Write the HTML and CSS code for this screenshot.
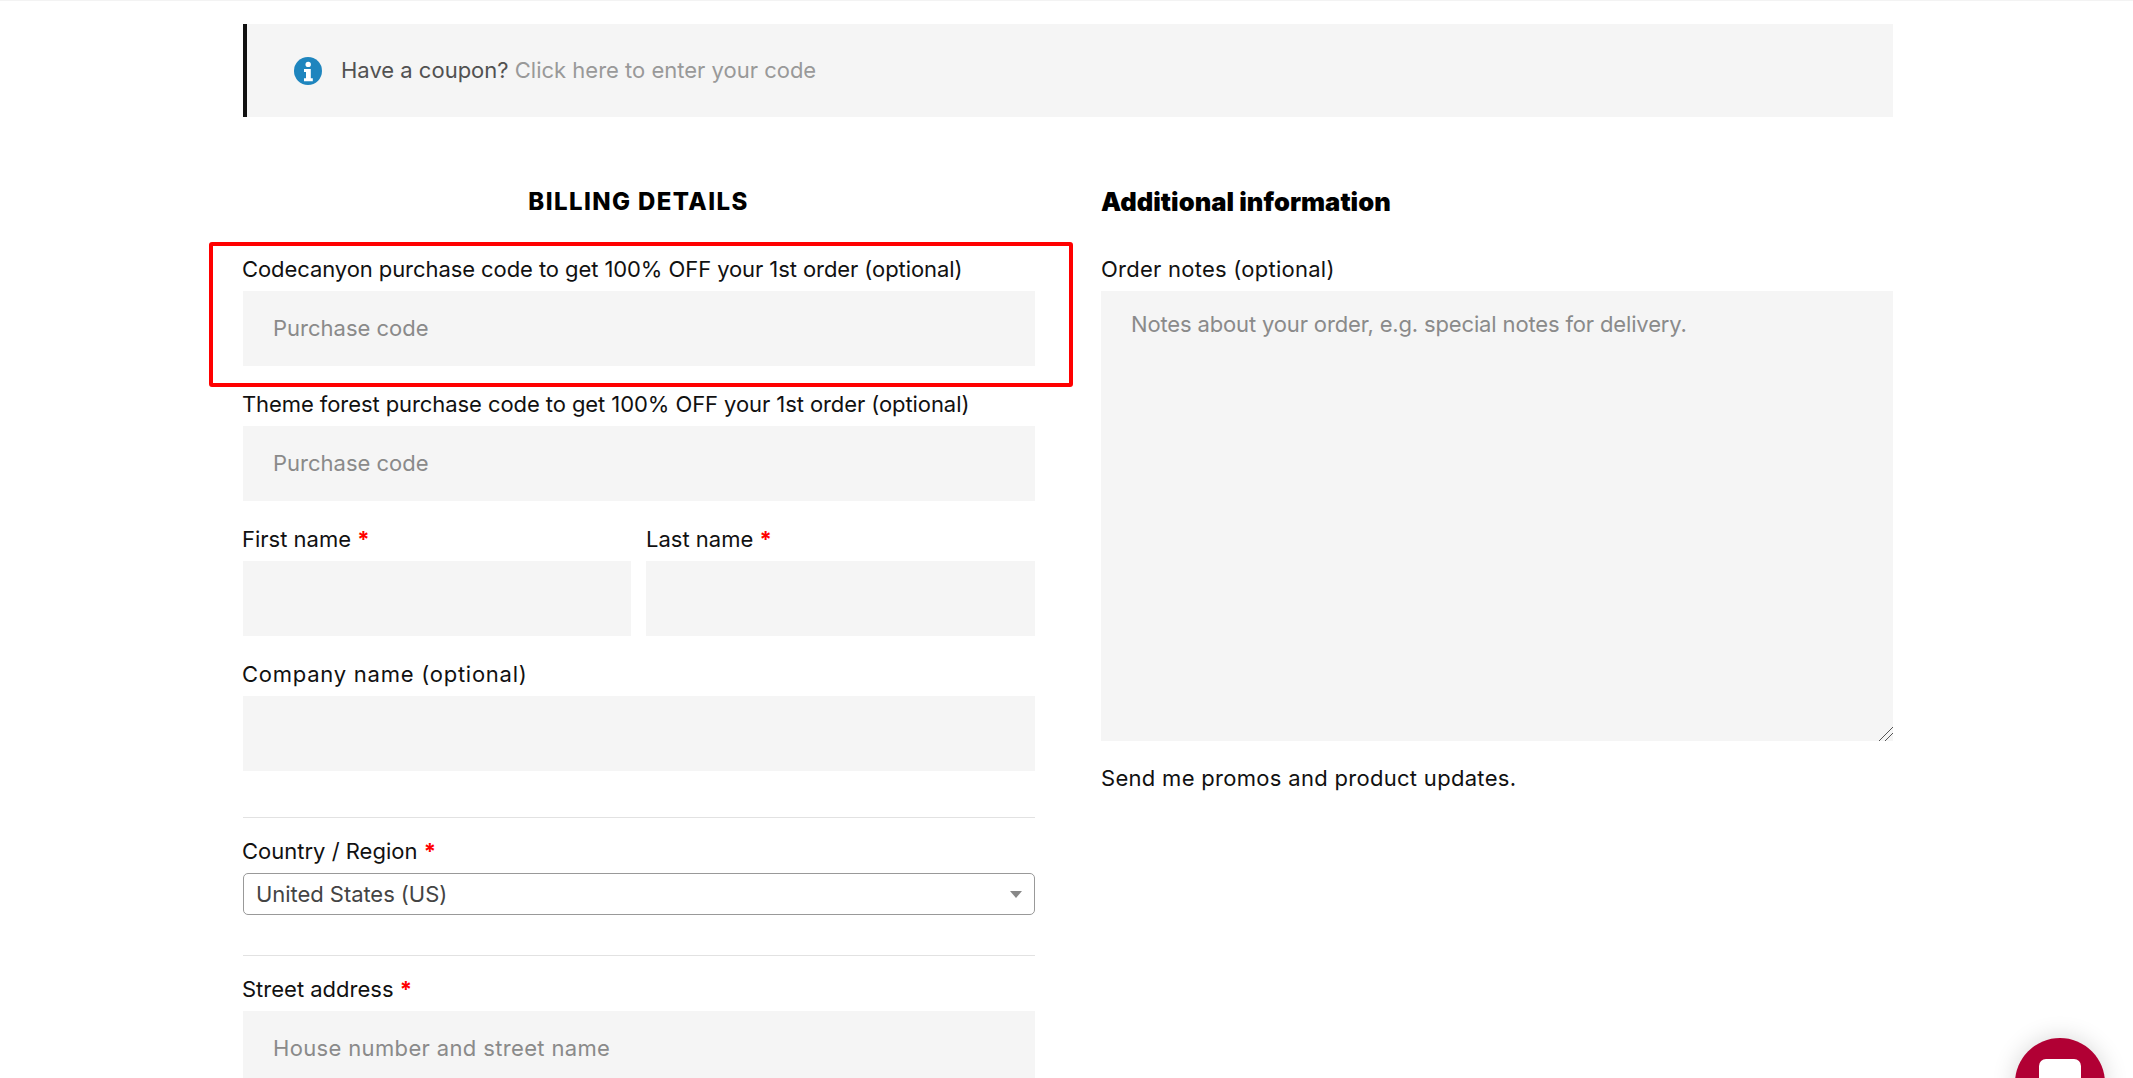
FILE: index.html
```html
<!DOCTYPE html>
<html lang="en">
<head>
<meta charset="utf-8">
<title>Checkout</title>
<link rel="stylesheet" href="styles.css">
</head>
<body>
<main class="page">
  <div class="coupon">
    <svg class="coupon-icon" viewBox="0 0 28 28" aria-hidden="true">
      <circle cx="14" cy="14" r="14" fill="#1e85be"/>
      <circle cx="14.2" cy="7.4" r="2.7" fill="#fff"/>
      <path d="M10 12h6.8v9.2h2v3H10v-3h2v-6.2h-2z" fill="#fff"/>
    </svg>
    <p class="coupon-text">Have a coupon? <a class="coupon-link" href="#">Click here to enter your code</a></p>
  </div>
  <div class="columns">
    <section>
      <h2 class="title title-center">BILLING DETAILS</h2>
      <div class="field">
        <label class="label label-long">Codecanyon purchase code to get 100% OFF your 1st order (optional)</label>
        <input class="input" placeholder="Purchase code">
      </div>
      <div class="field">
        <label class="label label-long">Theme forest purchase code to get 100% OFF your 1st order (optional)</label>
        <input class="input" placeholder="Purchase code">
      </div>
      <div class="name-row">
        <div class="field">
          <label class="label">First name <span class="req">*</span></label>
          <input class="input">
        </div>
        <div class="field">
          <label class="label label-flush">Last name <span class="req">*</span></label>
          <input class="input">
        </div>
      </div>
      <div class="field">
        <label class="label label-wide">Company name (optional)</label>
        <input class="input">
      </div>
      <hr class="divider">
      <div class="field field-select">
        <label class="label">Country / Region <span class="req">*</span></label>
        <div class="select-box">
          <span class="select-value">United States (US)</span>
          <span class="select-arrow"></span>
        </div>
      </div>
      <hr class="divider divider-tight">
      <div class="field">
        <label class="label">Street address <span class="req">*</span></label>
        <input class="input input-wide" placeholder="House number and street name">
      </div>
    </section>
    <section>
      <h2 class="title title-plain">Additional information</h2>
      <div class="field">
        <label class="label label-notes">Order notes (optional)</label>
        <textarea class="notes" placeholder="Notes about your order, e.g. special notes for delivery."></textarea>
      </div>
      <p class="promo">Send me promos and product updates.</p>
    </section>
  </div>
  <div class="highlight"></div>
</main>
<div class="chat"><span class="chat-icon"></span></div>
</body>
</html>
```

FILE: styles.css
```css
* { box-sizing: border-box; }
html, body { margin: 0; height: 100%; overflow: hidden; background: #fff; }
body {
  font-family: "Inter", "Liberation Sans", sans-serif;
  font-size: 22px;
  color: #111;
  border-top: 1px solid #f3f3f3;
}
.page { position: relative; width: 2133px; padding: 23px 240px 0 243px; }
.coupon {
  display: flex; align-items: center; gap: 19px;
  height: 93px; padding-left: 47px;
  background: #f5f5f5; border-left: 4px solid #111;
  margin-bottom: 66px;
}
.coupon-icon { width: 28px; height: 28px; flex: none; }
.coupon-text { margin: -2px 0 0; color: #515151; font-size: 22px; }
.coupon-link { color: #999; text-decoration: none; }
.columns { display: grid; grid-template-columns: 792px 792px; gap: 66px; }
.title {
  margin: 0 0 34px; height: 36px; line-height: 37px;
  font-size: 24px; font-weight: 800; color: #000;
}
.title-center { text-align: center; letter-spacing: 1.4px; margin-left: -1px; }
.title-plain { font-size: 25.5px; font-weight: 900; letter-spacing: .05px; }
.field { margin-bottom: 22px; }
.field-select { margin-bottom: 0; }
.label { display: block; line-height: 30px; padding: 1px 0 7px; font-size: 22px; color: #111; white-space: nowrap; margin-left: -1px; }
.label-long { letter-spacing: -.08px; }
.label-flush { margin-left: 0; }
.label-wide { letter-spacing: .75px; }
.label-notes { letter-spacing: .25px; margin-left: 0; }
.req { color: #f00; font-weight: 700; }
.input {
  display: block; width: 100%; height: 75px; padding: 0 30px 2px;
  border: 0; background: #f5f5f5; font: inherit; font-size: 22px; color: #333;
}
.input-wide { letter-spacing: .35px; }
.input::placeholder, .notes::placeholder { color: #8a8a8a; opacity: 1; }
.name-row { display: grid; grid-template-columns: 388px 389px; gap: 15px; }
.divider { height: 1px; margin: 46px 0 17px; border: 0; background: #e2e2e2; }
.divider-tight { margin-top: 40px; }
.select-box {
  display: flex; align-items: center; justify-content: space-between;
  height: 42px; padding: 0 12px 0 12px;
  border: 1px solid #999; border-radius: 5px; background: #fff;
}
.select-value { font-size: 22px; color: #444; letter-spacing: -.05px; }
.select-arrow { border-style: solid; border-width: 7px 6px 0; border-color: #888 transparent transparent; }
.notes {
  display: block; width: 100%; height: 450px; padding: 17px 30px;
  border: 0; background: #f5f5f5; font: inherit; font-size: 22px; letter-spacing: -.15px; line-height: 1.5; color: #333; outline: 0;
}
.notes::-webkit-resizer {
  background: linear-gradient(135deg, transparent 51%, #555 51%, #555 56%, transparent 56%, transparent 71%, #555 71%, #555 76%, transparent 76%);
}
.promo { margin: 1px 0 0; line-height: 30px; font-size: 22px; letter-spacing: .3px; color: #111; }
.highlight {
  position: absolute; left: 209px; top: 241px; width: 864px; height: 145px;
  border: 4px solid #f00; border-radius: 3px; pointer-events: none;
}
.chat {
  position: fixed; left: 2015px; top: 1038px; width: 90px; height: 90px;
  border-radius: 50%; background: #b10034; box-shadow: 0 0 24px rgba(0,0,0,.16);
}
.chat-icon { position: absolute; left: 24px; top: 21px; width: 42px; height: 42px; border-radius: 7px; background: #fff; }
```
